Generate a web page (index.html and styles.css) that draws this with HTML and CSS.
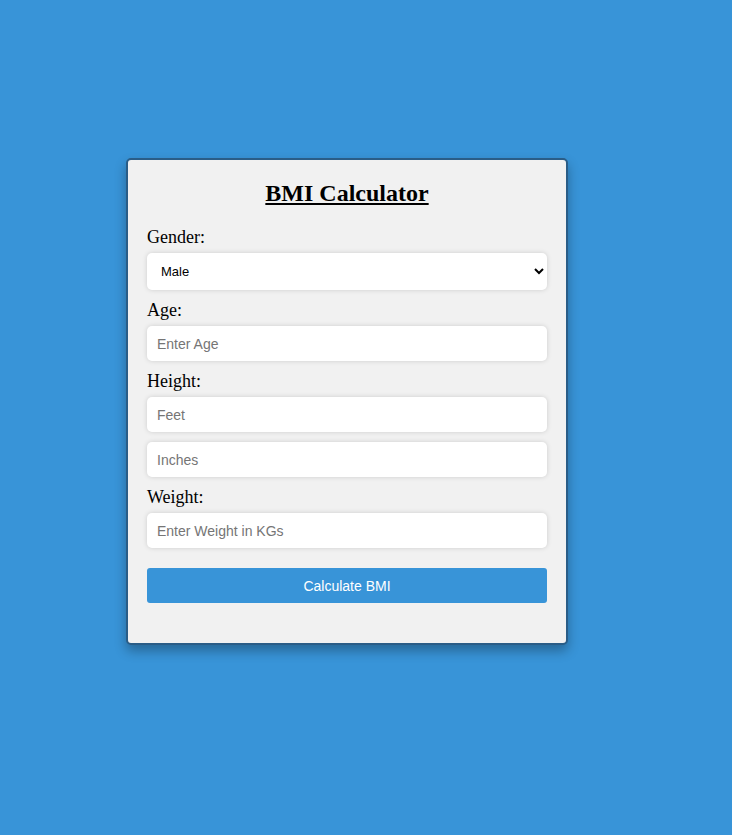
FILE: index.html
```html
<!DOCTYPE html>
<html>
<head>
<meta charset="utf-8">
<title>BMI Calculator</title>
<link rel="stylesheet" href="styles.css">
</head>
<body>
<div class="card">
  <h2 class="title">BMI Calculator</h2>
  <form class="form">
    <label class="label">Gender:</label>
    <select class="field select">
      <option>Male</option>
      <option>Female</option>
    </select>
    <label class="label">Age:</label>
    <input class="field" type="text" placeholder="Enter Age">
    <label class="label">Height:</label>
    <input class="field" type="text" placeholder="Feet">
    <input class="field" type="text" placeholder="Inches">
    <label class="label">Weight:</label>
    <input class="field" type="text" placeholder="Enter Weight in KGs">
    <button class="btn" type="button">Calculate BMI</button>
  </form>
</div>
</body>
</html>
```

FILE: styles.css
```css
html, body {
  margin: 0;
  padding: 0;
}
body {
  background: #3894d8;
  min-height: 835px;
  font-family: "Liberation Serif", "Times New Roman", serif;
}
.card {
  box-sizing: border-box;
  width: 442px;
  margin: 158px 0 0 126px;
  background: #f1f1f1;
  border: 2px solid #2a5d87;
  border-radius: 5px;
  padding: 19px 19px 40px;
  box-shadow: 0 6px 12px rgba(0, 0, 0, 0.3);
}
.title {
  margin: 0 0 20px;
  text-align: center;
  font-size: 24px;
  font-weight: bold;
  text-decoration: underline;
  color: #000;
  line-height: 28px;
}
.form {
  display: flex;
  flex-direction: column;
}
.label {
  display: block;
  font-size: 18px;
  line-height: 21px;
  margin-bottom: 5px;
  color: #000;
}
.field {
  box-sizing: border-box;
  width: 400px;
  height: 35px;
  margin: 0 0 10px;
  padding: 0 10px;
  border: none;
  border-radius: 5px;
  background: #fff;
  box-shadow: 0 0 5px rgba(0, 0, 0, 0.15);
  font-family: "Liberation Sans", Arial, sans-serif;
  font-size: 14px;
  color: #000;
  outline: none;
}
.field::placeholder {
  color: #757575;
}
.select {
  height: 37px;
  padding: 0 6px 0 10px;
  font-size: 13px;
}
.btn {
  width: 400px;
  height: 35px;
  margin-top: 10px;
  border: none;
  border-radius: 3px;
  background: #3894d8;
  color: #fff;
  font-family: "Liberation Sans", Arial, sans-serif;
  font-size: 14px;
  cursor: pointer;
}
```
